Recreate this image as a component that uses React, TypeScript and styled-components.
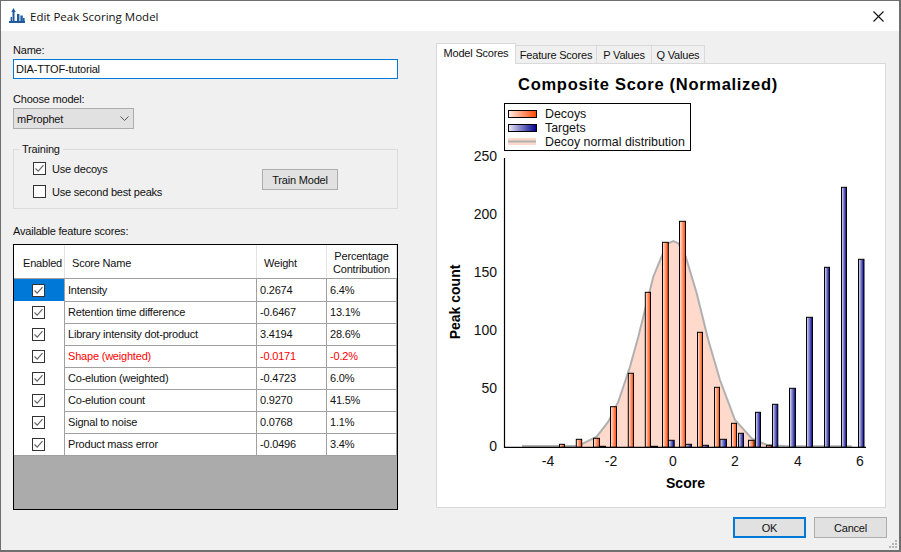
import React from "react";
import styled, { createGlobalStyle } from "styled-components";

const Global = createGlobalStyle`
  html, body { margin: 0; padding: 0; background: #f0f0f0; }
  #root { width: 901px; height: 552px; }
`;

const UI = `"Liberation Sans", Arial, sans-serif`;

const Window = styled.div`
  box-sizing: border-box;
  width: 901px;
  height: 552px;
  border: 1px solid #6f6f6f;
  border-width: 1px 2px 2px 1px;
  background: #f0f0f0;
  display: flex;
  flex-direction: column;
  position: relative;
  overflow: hidden;
  font-family: ${UI};
  font-size: 11px;
  letter-spacing: -0.2px;
  color: #111;
`;

const TitleBar = styled.div`
  height: 30px;
  flex: none;
  background: #fff;
  display: flex;
  align-items: center;
  padding: 0 15px 0 8px;
`;

const TitleText = styled.span`
  font-family: "Open Sans", sans-serif;
  font-size: 11.5px;
  letter-spacing: 0;
  color: #111;
  margin-left: 4px;
  flex: 1;
`;

const Body = styled.div`
  flex: none;
  height: 479px;
  box-sizing: border-box;
  display: flex;
  padding: 12px 12px 0 12px;
`;

const LeftColumn = styled.div`
  width: 385px;
  flex: none;
  display: flex;
  flex-direction: column;
`;

const FieldLabel = styled.div<{ $top?: number }>`
  flex: none;
  height: 16px;
  line-height: 14px;
  margin-top: ${(p) => p.$top ?? 0}px;
`;

const NameInput = styled.input`
  box-sizing: border-box;
  flex: none;
  width: 385px;
  height: 20px;
  border: 1px solid #0078d7;
  padding: 0 2px;
  margin: 0;
  outline: none;
  font: inherit;
  letter-spacing: inherit;
  color: #111;
  background: #fff;
  display: block;
`;

const ComboBox = styled.div`
  box-sizing: border-box;
  flex: none;
  width: 121px;
  height: 21px;
  background: #e1e1e1;
  border: 1px solid #adadad;
  display: flex;
  align-items: center;
  justify-content: space-between;
  padding: 0 4px 0 3px;
`;

const Group = styled.fieldset`
  box-sizing: border-box;
  flex: none;
  width: 385px;
  height: 66px;
  margin: 14px 0 0 0;
  padding: 0 0 0 19px;
  border: 1px solid #dcdcdc;
  position: relative;
  display: flex;
  flex-direction: column;
`;

const GroupLegend = styled.legend`
  padding: 0 3px;
  margin-left: -14px;
  line-height: 13px;
`;

const CheckOptions = styled.div`
  display: flex;
  flex-direction: column;
  gap: 10px;
  margin-top: 6px;
`;

const CheckRow = styled.div`
  display: flex;
  align-items: center;
  gap: 6px;
  height: 13px;
`;

const TrainButton = styled.button`
  position: absolute;
  left: 248px;
  top: 13px;
  box-sizing: border-box;
  width: 76px;
  height: 21px;
  background: #e1e1e1;
  border: 1px solid #adadad;
  font: inherit;
  letter-spacing: inherit;
  color: #111;
  padding: 0;
`;

const BoxMark = styled.span`
  box-sizing: border-box;
  display: inline-flex;
  width: 13px;
  height: 13px;
  border: 1px solid #333;
  background: #fff;
  flex: none;
`;

const ScoreTable = styled.div`
  box-sizing: border-box;
  flex: none;
  width: 385px;
  height: 266px;
  margin-top: 4px;
  border: 1px solid #000;
  background: #ababab;
`;

const HeaderRow = styled.div`
  display: grid;
  grid-template-columns: 51px 192px 70px 70px;
  height: 33px;
  background: #fff;
  border-bottom: 1px solid #a0a0a0;
`;

const HeaderCell = styled.div<{ $center?: boolean; $pad?: number }>`
  display: flex;
  align-items: center;
  justify-content: ${(p) => (p.$center ? "center" : "flex-start")};
  text-align: center;
  padding: 3px 0 0 ${(p) => p.$pad ?? 0}px;
  border-right: 1px solid #e3e3e3;
  line-height: 13px;
  box-sizing: border-box;
`;

const DataRow = styled.div`
  display: grid;
  grid-template-columns: 51px 192px 70px 70px;
  height: 22px;
  background: #fff;
`;

const CheckCell = styled.div<{ $selected?: boolean }>`
  box-sizing: border-box;
  display: flex;
  align-items: center;
  justify-content: center;
  padding-right: 1px;
  background: ${(p) => (p.$selected ? "#0078d7" : "#fff")};
  border-right: 1px solid #a0a0a0;
  border-bottom: 1px solid #a0a0a0;
`;

const TextCell = styled.div<{ $warn?: boolean }>`
  box-sizing: border-box;
  padding-left: 3px;
  line-height: 22px;
  white-space: nowrap;
  color: ${(p) => (p.$warn ? "#ff0000" : "#111")};
  border-right: 1px solid #a0a0a0;
  border-bottom: 1px solid #a0a0a0;
`;

const RightColumn = styled.div`
  width: 450px;
  margin-left: 38px;
  flex: none;
  display: flex;
  flex-direction: column;
`;

const TabStrip = styled.div`
  display: flex;
  align-items: flex-end;
  flex: none;
  height: 21px;
  position: relative;
  z-index: 1;
  margin-bottom: -1px;
`;

const Tab = styled.div<{ $active?: boolean; $w: number }>`
  box-sizing: border-box;
  width: ${(p) => p.$w}px;
  height: ${(p) => (p.$active ? 21 : 19)}px;
  background: ${(p) => (p.$active ? "#fff" : "#f0f0f0")};
  border: 1px solid #d9d9d9;
  border-bottom: ${(p) => (p.$active ? "none" : "1px solid #d9d9d9")};
  border-left: ${(p) => (p.$active ? "1px solid #d9d9d9" : "none")};
  display: flex;
  align-items: center;
  justify-content: center;
  padding-bottom: ${(p) => (p.$active ? 2 : 0)}px;
  white-space: nowrap;
`;

const TabPanel = styled.div`
  box-sizing: border-box;
  flex: none;
  width: 450px;
  height: 445px;
  border: 1px solid #d9d9d9;
  background: #fff;
`;

const ChartSvg = styled.svg`
  display: block;
  width: 448px;
  height: 443px;
  font-family: ${UI};
  letter-spacing: 0;
`;

const Footer = styled.div`
  flex: none;
  height: 40px;
  display: flex;
  justify-content: flex-end;
  gap: 8px;
  padding: 7px 12px 0 0;
  box-sizing: border-box;
`;

const DialogButton = styled.button<{ $primary?: boolean }>`
  box-sizing: border-box;
  width: 73px;
  height: 21px;
  background: #e1e1e1;
  border: ${(p) => (p.$primary ? "2px solid #0078d7" : "1px solid #adadad")};
  font: inherit;
  letter-spacing: inherit;
  color: #111;
  padding: 0;
`;

const Grip = styled.svg`
  position: absolute;
  right: 1px;
  bottom: 1px;
`;

const CheckMark = ({ checked = true }: { checked?: boolean }) => (
  <BoxMark>
    {checked && (
      <svg width="11" height="11" viewBox="0 0 11 11">
        <path d="M1.5 5.5 L4.2 8.2 L9.5 2.2" fill="none" stroke="#666" strokeWidth="1.2" />
      </svg>
    )}
  </BoxMark>
);

const AppIcon = () => (
  <svg width="17" height="16" viewBox="0 0 17 16">
    <g fill="#1f5a9e">
      <rect x="0" y="13" width="16" height="2" />
      <path d="M4.5 0 L6.7 4 L5.5 4 L5.5 13 L3.5 13 L3.5 4 L2.3 4 Z" />
      <rect x="8" y="6" width="2.4" height="7" />
      <rect x="11.4" y="7.5" width="2.4" height="5.5" />
      <rect x="14" y="10" width="1.6" height="3" />
      <rect x="1.6" y="9" width="1.4" height="4" />
    </g>
  </svg>
);

const rows = [
  ["Intensity", "0.2674", "6.4%"],
  ["Retention time difference", "-0.6467", "13.1%"],
  ["Library intensity dot-product", "3.4194", "28.6%"],
  ["Shape (weighted)", "-0.0171", "-0.2%"],
  ["Co-elution (weighted)", "-0.4723", "6.0%"],
  ["Co-elution count", "0.9270", "41.5%"],
  ["Signal to noise", "0.0768", "1.1%"],
  ["Product mass error", "-0.0496", "3.4%"],
];

const BASE = 447.3;

const decoys: [number, number, number][] = [
  [559.5, 564.5, 444.3], [576.3, 581.7, 439.3], [593.5, 599.5, 438.3], [610.5, 616.5, 406.7],
  [628.3, 633.5, 373.3], [645.3, 650.5, 292.3], [662.5, 668.3, 242.3], [679.5, 685.5, 221.3],
  [697.5, 702.5, 332.3], [714.5, 719.5, 387.3], [731.5, 736.5, 423.3], [748.5, 754.2, 440.3],
  [766.5, 771.8, 445.3],
];

const targets: [number, number, number][] = [
  [600, 605.5, 446.3], [651, 657.5, 446.3], [668.5, 674.2, 440.3], [685.7, 691.5, 444.3],
  [702.7, 708.5, 445.3], [720, 726.5, 439.3], [738.5, 743.5, 433.3], [755.5, 760.5, 412.3],
  [772.5, 777.8, 404.3], [789.5, 795.5, 388.3], [806.5, 812.5, 317.3], [824.5, 829.5, 267.3],
  [841.5, 846.5, 187.3], [858.5, 864, 259.3],
];

const curve: [number, number][] = [
  [522, 446], [570, 446], [580, 446], [583.3, 443.3], [596.7, 436.7], [608.3, 421.7], [618.3, 401.7],
  [630, 366.7], [638.3, 336.7], [645, 310], [653.3, 276.7], [662.3, 255], [668.3, 243.3], [673.3, 241],
  [678.3, 243.3], [685.7, 256.7], [696.7, 293.3], [708.3, 340], [720, 380], [735, 420], [751.7, 438.3],
  [766.7, 445], [786.7, 446.3], [851.7, 446.3],
];

const linePts = curve.map((p) => p.join(",")).join(" ");
const fillPts = `522,${BASE} ${linePts} 851.7,${BASE}`;

const yTicks: [string, number][] = [
  ["250", 161], ["200", 219], ["150", 277], ["100", 335], ["50", 393], ["0", 451],
];
const xTicks: [string, number][] = [
  ["-4", 548], ["-2", 611], ["0", 673], ["2", 735], ["4", 798], ["6", 860],
];

const Bars = ({ data, fill }: { data: [number, number, number][]; fill: string }) => (
  <g fill={`url(#${fill})`} stroke="#000" strokeWidth="1">
    {data.map(([a, b, t]) => (
      <rect key={a} x={a} y={t} width={b - a} height={BASE - t} />
    ))}
  </g>
);

const Chart = () => (
  <ChartSvg viewBox="437 64 448 443">
    <defs>
      <linearGradient id="dec" x1="0" x2="1" y1="0" y2="0">
        <stop offset="0" stopColor="#ffeee6" />
        <stop offset="1" stopColor="#ff4500" />
      </linearGradient>
      <linearGradient id="tar" x1="0" x2="1" y1="0" y2="0">
        <stop offset="0" stopColor="#e8e8f8" />
        <stop offset="1" stopColor="#00008b" />
      </linearGradient>
    </defs>

    <text x="648" y="89.5" textAnchor="middle" fontSize="16.5" letterSpacing="0.7" fontWeight="700" fill="#000">
      Composite Score (Normalized)
    </text>

    <polygon points={fillPts} fill="#ffd9cb" />
    <polyline points={linePts} fill="none" stroke="#b0b0b0" strokeWidth="2" />
    <Bars data={decoys} fill="dec" />
    <Bars data={targets} fill="tar" />

    <path d={`M504.5 158 V${BASE} H866`} fill="none" stroke="#000" strokeWidth="1.2" />

    {yTicks.map(([l, y]) => (
      <text key={l} x="497" y={y} textAnchor="end" fontSize="14" fill="#111">{l}</text>
    ))}
    {xTicks.map(([l, x]) => (
      <text key={l} x={x} y="466" textAnchor="middle" fontSize="14" fill="#111">{l}</text>
    ))}
    <text x="685.5" y="488" textAnchor="middle" fontSize="14" fontWeight="700" fill="#000">Score</text>
    <text transform="translate(460 302) rotate(-90)" textAnchor="middle" fontSize="14" fontWeight="700" fill="#000">
      Peak count
    </text>

    <rect x="504.5" y="103.5" width="186" height="47" fill="#fff" stroke="#000" strokeWidth="1" />
    <rect x="508.5" y="110.5" width="28" height="7" fill="url(#dec)" stroke="#000" strokeWidth="1" />
    <rect x="508.5" y="124.5" width="28" height="7" fill="url(#tar)" stroke="#000" strokeWidth="1" />
    <rect x="508" y="138" width="28" height="7" fill="#ffd9cb" />
    <rect x="508" y="140.5" width="28" height="2" fill="#b0b0b0" />
    <text x="545" y="118" fontSize="12.4" fill="#111">Decoys</text>
    <text x="545" y="132" fontSize="12.4" fill="#111">Targets</text>
    <text x="545" y="146" fontSize="12.4" fill="#111">Decoy normal distribution</text>
  </ChartSvg>
);

export default function App() {
  return (
    <Window>
      <Global />
      <TitleBar>
        <AppIcon />
        <TitleText>Edit Peak Scoring Model</TitleText>
        <svg width="11" height="11" viewBox="0 0 11 11">
          <path d="M0.5 0.5 L10.5 10.5 M10.5 0.5 L0.5 10.5" stroke="#111" strokeWidth="1.1" />
        </svg>
      </TitleBar>
      <Body>
        <LeftColumn>
          <FieldLabel>Name:</FieldLabel>
          <NameInput readOnly value="DIA-TTOF-tutorial" />
          <FieldLabel $top={13}>Choose model:</FieldLabel>
          <ComboBox>
            <span>mProphet</span>
            <svg width="9" height="5" viewBox="0 0 9 5">
              <path d="M0.5 0.5 L4.5 4.5 L8.5 0.5" fill="none" stroke="#555" strokeWidth="1" />
            </svg>
          </ComboBox>
          <Group>
            <GroupLegend>Training</GroupLegend>
            <CheckOptions>
              <CheckRow><CheckMark /><span>Use decoys</span></CheckRow>
              <CheckRow><CheckMark checked={false} /><span>Use second best peaks</span></CheckRow>
            </CheckOptions>
            <TrainButton>Train Model</TrainButton>
          </Group>
          <FieldLabel $top={15}>Available feature scores:</FieldLabel>
          <ScoreTable>
            <HeaderRow>
              <HeaderCell $pad={9}>Enabled</HeaderCell>
              <HeaderCell $pad={7}>Score Name</HeaderCell>
              <HeaderCell $pad={7}>Weight</HeaderCell>
              <HeaderCell $center>Percentage<br />Contribution</HeaderCell>
            </HeaderRow>
            {rows.map((r, i) => (
              <DataRow key={r[0]}>
                <CheckCell $selected={i === 0}><CheckMark /></CheckCell>
                <TextCell $warn={i === 3}>{r[0]}</TextCell>
                <TextCell $warn={i === 3}>{r[1]}</TextCell>
                <TextCell $warn={i === 3}>{r[2]}</TextCell>
              </DataRow>
            ))}
          </ScoreTable>
        </LeftColumn>
        <RightColumn>
          <TabStrip>
            <Tab $active $w={80}>Model Scores</Tab>
            <Tab $w={81}>Feature Scores</Tab>
            <Tab $w={55}>P Values</Tab>
            <Tab $w={53}>Q Values</Tab>
          </TabStrip>
          <TabPanel><Chart /></TabPanel>
        </RightColumn>
      </Body>
      <Footer>
        <DialogButton $primary>OK</DialogButton>
        <DialogButton>Cancel</DialogButton>
      </Footer>
      <Grip width="9" height="9" viewBox="0 0 9 9">
        <g fill="#b5b5b5">
          <rect x="6" y="0" width="2" height="2" />
          <rect x="3" y="3" width="2" height="2" />
          <rect x="6" y="3" width="2" height="2" />
          <rect x="0" y="6" width="2" height="2" />
          <rect x="3" y="6" width="2" height="2" />
          <rect x="6" y="6" width="2" height="2" />
        </g>
      </Grip>
    </Window>
  );
}
